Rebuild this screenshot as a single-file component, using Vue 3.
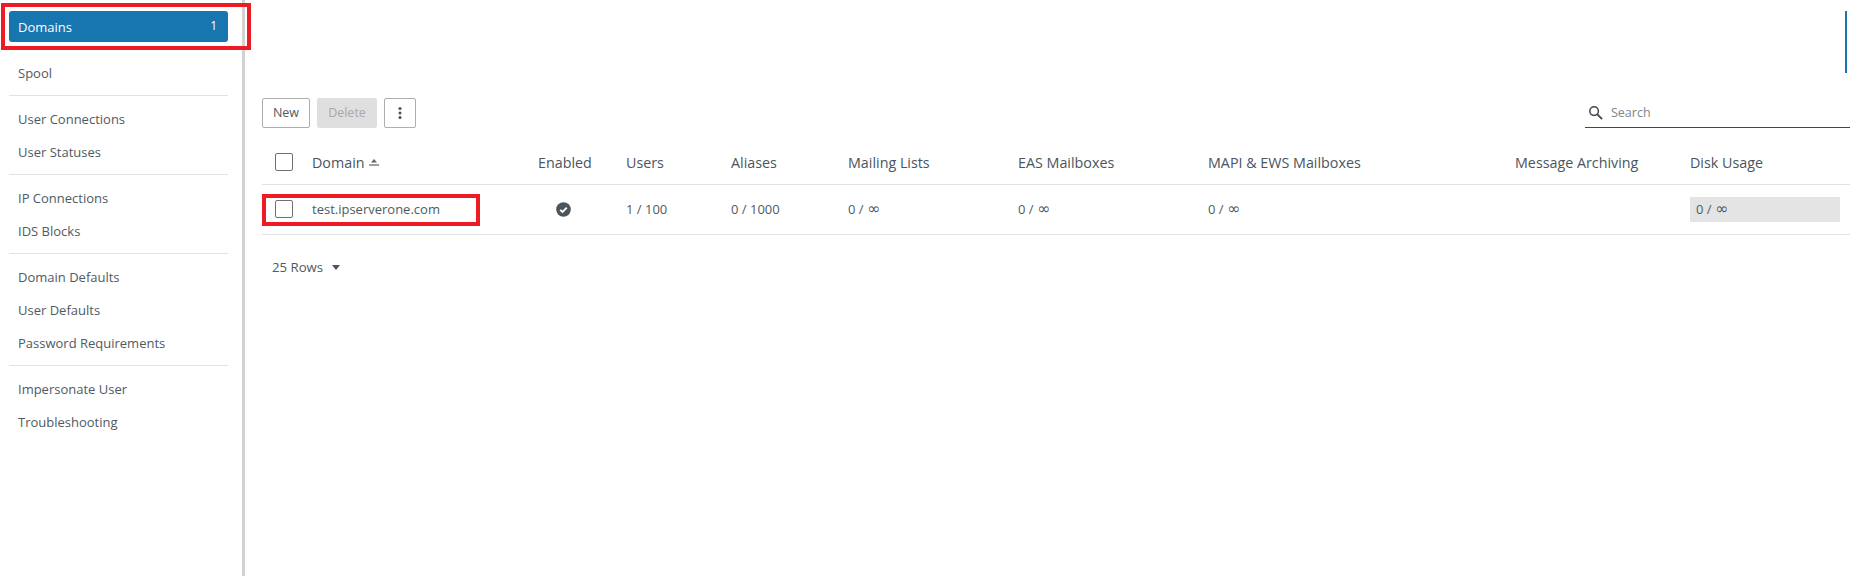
<script setup>
const groups = [
  ['Spool'],
  ['User Connections', 'User Statuses'],
  ['IP Connections', 'IDS Blocks'],
  ['Domain Defaults', 'User Defaults', 'Password Requirements'],
  ['Impersonate User', 'Troubleshooting'],
]
const headers = [
  { label: 'Enabled', center: true },
  { label: 'Users' },
  { label: 'Aliases' },
  { label: 'Mailing Lists' },
  { label: 'EAS Mailboxes' },
  { label: 'MAPI & EWS Mailboxes' },
  { label: 'Message Archiving' },
  { label: 'Disk Usage' },
]
</script>

<template>
  <div class="page">
    <aside class="side">
      <div class="active"><span>Domains</span><span class="count">1</span></div>
      <div v-for="(g, i) in groups" :key="i" class="group">
        <div v-for="item in g" :key="item" class="item">{{ item }}</div>
      </div>
    </aside>
    <main class="main">
      <div class="top"><div class="bar"></div></div>
      <div class="toolbar">
        <button class="btn new">New</button>
        <button class="btn del">Delete</button>
        <button class="btn more" aria-label="More">
          <svg width="4" height="12" viewBox="0 0 4 12"><circle cx="2" cy="1.5" r="1.5" /><circle cx="2" cy="6" r="1.5" /><circle cx="2" cy="10.5" r="1.5" /></svg>
        </button>
        <div class="search">
          <svg width="15" height="15" viewBox="0 0 16 16" fill="none" stroke="#3f4850"><circle cx="6.5" cy="6.5" r="4.6" stroke-width="1.6" /><path d="M10 10l5 5" stroke-width="2" /></svg>
          <span>Search</span>
        </div>
      </div>
      <div class="row head">
        <div class="cellc"><span class="check"></span></div>
        <div class="domain">Domain
          <svg width="10" height="7" viewBox="0 0 10 7" fill="#5a646c"><path d="M5 0l3 3.5H2z" /><rect y="5.4" width="10" height="1.2" /></svg>
        </div>
        <div v-for="h in headers" :key="h.label" :class="{ center: h.center }">{{ h.label }}</div>
      </div>
      <div class="row body">
        <div class="cellc"><span class="check"></span></div>
        <div class="name">test.ipserverone.com</div>
        <div class="center">
          <svg class="ok" width="15" height="15" viewBox="0 0 15 15"><circle cx="7.5" cy="7.5" r="7.3" fill="#4a545c" /><path d="M4.2 7.8l2.3 2.2 4.3-4.3" fill="none" stroke="#fff" stroke-width="1.8" /></svg>
        </div>
        <div>1 / 100</div>
        <div>0 / 1000</div>
        <div>0 / <span class="inf">∞</span></div>
        <div>0 / <span class="inf">∞</span></div>
        <div>0 / <span class="inf">∞</span></div>
        <div></div>
        <div><div class="disk">0 / <span class="inf">∞</span></div></div>
      </div>
      <div class="rows">25 Rows <i class="caret"></i></div>
    </main>
    <div class="mark mark1"></div>
    <div class="mark mark2"></div>
  </div>
</template>

<style scoped>
.page {
  position: relative;
  display: flex;
  height: 576px;
  background: #fff;
  color: #4f5a63;
  font-family: "Open Sans", "Noto Sans", sans-serif;
  font-size: 13px;
  overflow: hidden;
}
.side {
  box-sizing: border-box;
  width: 245px;
  flex: none;
  padding: 11px 14px 0 9px;
  border-right: 3px solid #d2d2d2;
}
.active {
  display: flex;
  justify-content: space-between;
  align-items: center;
  height: 31px;
  padding: 0 11px 0 9px;
  margin-bottom: 14.5px;
  border-radius: 3px;
  background: #1775af;
  color: #fff;
}
.count { font-size: 12px; margin-top: -3px; }
.group { border-bottom: 1px solid #e2e2e2; padding-bottom: 5.5px; margin-bottom: 6.5px; }
.group:last-child { border-bottom: 0; }
.item { height: 33px; line-height: 33px; padding-left: 9px; white-space: nowrap; }
.main { flex: 1; min-width: 0; padding: 0 7px 0 17px; }
.top { box-sizing: border-box; height: 98px; padding: 11px 3px 0 0; display: flex; justify-content: flex-end; }
.bar { width: 2px; height: 62px; background: #1775af; }
.toolbar { display: flex; height: 30px; gap: 7px; }
.btn {
  box-sizing: border-box;
  height: 30px;
  padding: 0 0 2px;
  border: 1px solid #aeaeae;
  border-radius: 2px;
  background: #fff;
  color: #4f5a63;
  font: inherit;
  font-size: 12.5px;
}
.new { width: 48px; }
.del { width: 60px; background: #dfdfdf; border-color: #dfdfdf; color: #a9a9a9; }
.more { width: 32px; padding: 0; display: flex; align-items: center; justify-content: center; fill: #46505a; }
.search {
  box-sizing: border-box;
  margin-left: auto;
  width: 265px;
  height: 30px;
  display: flex;
  align-items: center;
  gap: 8px;
  padding: 0 0 1px 3px;
  border-bottom: 1px solid #3f4850;
  font-size: 12.5px;
  color: #7d868d;
}
.row {
  display: grid;
  grid-template-columns: 50px 226px 88px 105px 117px 170px 190px 307px 175px 160px;
  align-items: center;
  border-bottom: 1px solid #e2e2e2;
}
.head { height: 57px; box-sizing: border-box; padding-top: 12px; font-size: 14.3px; color: #4a5560; }
.body { height: 50px; box-sizing: border-box; padding-bottom: 1px; }
.cellc { display: flex; padding-left: 13px; }
.check { box-sizing: border-box; width: 18px; height: 18px; border: 1px solid #6f6f6f; border-radius: 2px; background: #fff; }
.domain { display: flex; align-items: center; gap: 4px; }
.center { text-align: center; width: 52px; }
.head > .center { white-space: nowrap; }
.ok { display: block; margin: 0 0 0 18px; }
.inf { font-family: "DejaVu Sans", sans-serif; font-size: 15.5px; line-height: 1; }
.disk { box-sizing: border-box; width: 150px; height: 25px; line-height: 25px; padding-left: 6px; background: #e4e4e4; }
.rows { margin-top: 22px; padding-left: 10px; display: flex; align-items: center; height: 20px; font-size: 13.2px; white-space: pre; }
.caret { margin-left: 5px; width: 0; height: 0; border: 4px solid transparent; border-top: 5px solid #4a5560; border-bottom: 0; }
.mark { position: absolute; box-sizing: border-box; border: 4px solid #ed1c24; pointer-events: none; }
.mark1 { left: 1px; top: 3px; width: 250px; height: 47px; }
.mark2 { left: 262px; top: 194px; width: 218px; height: 32px; }
</style>
